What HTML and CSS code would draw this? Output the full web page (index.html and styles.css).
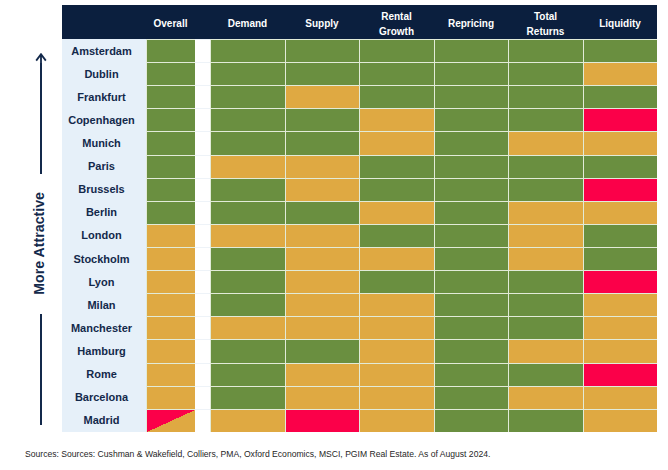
FILE: index.html
```html
<!DOCTYPE html>
<html lang="en">
<head>
<meta charset="utf-8">
<title>European city attractiveness matrix</title>
<link rel="stylesheet" href="styles.css">
</head>
<body>
<div class="page">
  <div class="axis">
    <svg class="arrow" width="12" height="10" viewBox="0 0 12 10"><path d="M1.2 7.6 L6 1.2 L10.8 7.6 M6 1.2 V10" fill="none" stroke="#13294b" stroke-width="1.8"/></svg>
    <div class="axis-line"></div>
    <div class="axis-label">More Attractive</div>
    <div class="axis-line"></div>
  </div>
  <div class="matrix">
    <div class="h"></div><div class="h">Overall</div><div class="h"></div><div class="h">Demand</div><div class="h">Supply</div><div class="h">Rental<br>Growth</div><div class="h">Repricing</div><div class="h">Total<br>Returns</div><div class="h">Liquidity</div>

    <div class="city">Amsterdam</div><div class="c g"></div><div class="gap"></div><div class="c g"></div><div class="c g"></div><div class="c g"></div><div class="c g"></div><div class="c g"></div><div class="c g"></div>
    <div class="city">Dublin</div><div class="c g"></div><div class="gap"></div><div class="c g"></div><div class="c g"></div><div class="c g"></div><div class="c g"></div><div class="c g"></div><div class="c a"></div>
    <div class="city">Frankfurt</div><div class="c g"></div><div class="gap"></div><div class="c g"></div><div class="c a"></div><div class="c g"></div><div class="c g"></div><div class="c g"></div><div class="c g"></div>
    <div class="city">Copenhagen</div><div class="c g"></div><div class="gap"></div><div class="c g"></div><div class="c g"></div><div class="c a"></div><div class="c g"></div><div class="c g"></div><div class="c r"></div>
    <div class="city">Munich</div><div class="c g"></div><div class="gap"></div><div class="c g"></div><div class="c g"></div><div class="c a"></div><div class="c g"></div><div class="c a"></div><div class="c a"></div>
    <div class="city">Paris</div><div class="c g"></div><div class="gap"></div><div class="c a"></div><div class="c a"></div><div class="c g"></div><div class="c g"></div><div class="c g"></div><div class="c g"></div>
    <div class="city">Brussels</div><div class="c g"></div><div class="gap"></div><div class="c g"></div><div class="c a"></div><div class="c g"></div><div class="c g"></div><div class="c g"></div><div class="c r"></div>
    <div class="city">Berlin</div><div class="c g"></div><div class="gap"></div><div class="c g"></div><div class="c g"></div><div class="c a"></div><div class="c g"></div><div class="c a"></div><div class="c a"></div>
    <div class="city">London</div><div class="c a"></div><div class="gap"></div><div class="c a"></div><div class="c a"></div><div class="c g"></div><div class="c g"></div><div class="c a"></div><div class="c g"></div>
    <div class="city">Stockholm</div><div class="c a"></div><div class="gap"></div><div class="c g"></div><div class="c a"></div><div class="c a"></div><div class="c g"></div><div class="c a"></div><div class="c g"></div>
    <div class="city">Lyon</div><div class="c a"></div><div class="gap"></div><div class="c g"></div><div class="c a"></div><div class="c g"></div><div class="c g"></div><div class="c g"></div><div class="c r"></div>
    <div class="city">Milan</div><div class="c a"></div><div class="gap"></div><div class="c g"></div><div class="c a"></div><div class="c a"></div><div class="c g"></div><div class="c g"></div><div class="c a"></div>
    <div class="city">Manchester</div><div class="c a"></div><div class="gap"></div><div class="c a"></div><div class="c a"></div><div class="c a"></div><div class="c g"></div><div class="c g"></div><div class="c a"></div>
    <div class="city">Hamburg</div><div class="c a"></div><div class="gap"></div><div class="c g"></div><div class="c g"></div><div class="c a"></div><div class="c g"></div><div class="c a"></div><div class="c a"></div>
    <div class="city">Rome</div><div class="c a"></div><div class="gap"></div><div class="c g"></div><div class="c a"></div><div class="c a"></div><div class="c g"></div><div class="c g"></div><div class="c r"></div>
    <div class="city">Barcelona</div><div class="c a"></div><div class="gap"></div><div class="c g"></div><div class="c a"></div><div class="c a"></div><div class="c g"></div><div class="c a"></div><div class="c a"></div>
    <div class="city">Madrid</div><div class="c m"></div><div class="gap"></div><div class="c a"></div><div class="c r"></div><div class="c a"></div><div class="c g"></div><div class="c g"></div><div class="c a"></div>
  </div>
</div>
<p class="sources">Sources: Sources: Cushman &amp; Wakefield, Colliers, PMA, Oxford Economics, MSCI, PGIM Real Estate. As of August 2024.</p>
</body>
</html>
```

FILE: styles.css
```css
html, body {
  margin: 0;
  padding: 0;
  background: #ffffff;
}

body {
  width: 668px;
  height: 470px;
  font-family: "Liberation Sans", Arial, sans-serif;
  overflow: hidden;
}

.page {
  display: flex;
  padding-top: 5px;
}

.axis {
  width: 42px;
  padding-left: 20px;
  padding-top: 48px;
  padding-bottom: 7px;
  display: flex;
  flex-direction: column;
  align-items: center;
  box-sizing: content-box;
}

.arrow {
  display: block;
  flex: none;
}

.axis-line {
  flex: 1;
  width: 2px;
  background: #13294b;
}

.axis-label {
  writing-mode: vertical-rl;
  transform: rotate(180deg);
  font-weight: bold;
  font-size: 14.2px;
  color: #13294b;
  margin: 18px 3px 20px 0;
  line-height: 1;
}

.matrix {
  display: grid;
  grid-template-columns: 84px 49px 15px 75px 74px 75px 74px 75px 74px;
  grid-template-rows: 34px repeat(17, 23.12px);
  width: 595px;
}

.h {
  background: #0b1f3e;
  color: #ffffff;
  font-weight: bold;
  font-size: 10px;
  line-height: 15px;
  padding-top: 3px;
  display: flex;
  align-items: center;
  justify-content: center;
  text-align: center;
}

.city {
  background: #e6f0f9;
  color: #13294b;
  font-weight: bold;
  font-size: 11px;
  display: flex;
  align-items: center;
  justify-content: center;
  padding-right: 5px;
}

.gap {
  background: #ffffff;
  border-top: 1px solid #eef3f8;
}

.c {
  border-top: 1px solid #e2ebd8;
  border-left: 1px solid #e2ebd8;
}

.g { background-color: #6a8f40; }
.a { background-color: #dfa942; }
.r { background-color: #fb0049; }
.m { background: linear-gradient(to bottom right, #fb0049 50%, #dfa942 50%); }

.sources {
  margin: 17px 0 0 25px;
  font-size: 8.6px;
  line-height: 11px;
  color: #262626;
}
```
